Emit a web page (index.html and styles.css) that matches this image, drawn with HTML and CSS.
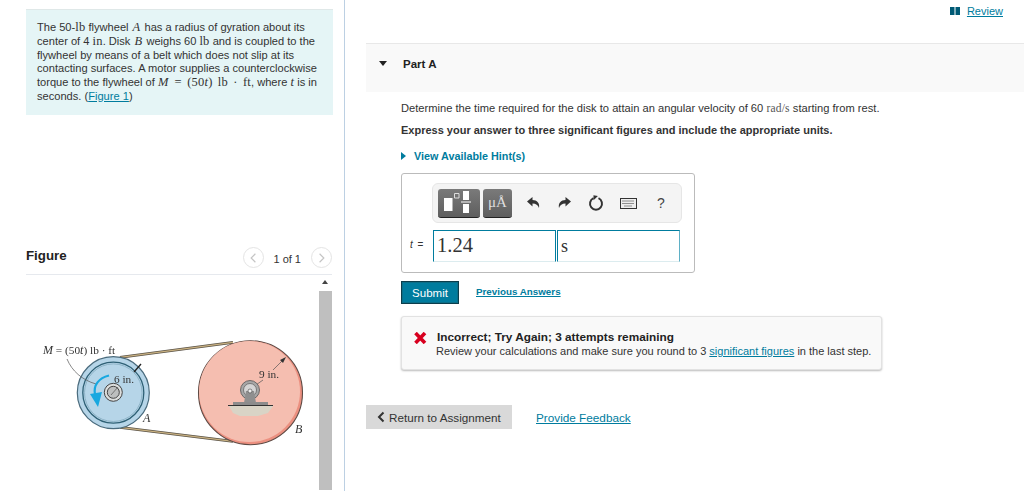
FILE: index.html
```html
<!DOCTYPE html>
<html lang="en">
<head>
<meta charset="utf-8">
<title>Part A</title>
<link rel="stylesheet" href="styles.css">
</head>
<body>
<div class="page">
  <aside class="left">
    <div class="prompt">The 50-<span class="m">lb</span> flywheel <i class="m mv">A</i> has a radius of gyration about its center of 4 <span class="m">in</span>. Disk <i class="m mv">B</i> weighs 60 <span class="m">lb</span> and is coupled to the flywheel by means of a belt which does not slip at its contacting surfaces. A motor supplies a counterclockwise torque to the flywheel of <i class="m">M</i> <span class="m mw">= (50<i>t</i>) lb · ft</span>, where <i class="m">t</i> is in seconds. (<a href="#">Figure 1</a>)</div>
    <div class="fig-head">
      <h2>Figure</h2>
      <div class="pager">
        <span class="pg"><svg viewBox="0 0 20 20" width="20" height="20"><path d="M12 5.500 7.500 10l4.500 4.500" class="chev"/></svg></span>
        <span class="pg-text">1 of 1</span>
        <span class="pg"><svg viewBox="0 0 20 20" width="20" height="20"><path d="M8 5.500 12.500 10 8 14.500" class="chev"/></svg></span>
      </div>
    </div>
    <div class="fig-body">
      <svg class="figure" viewBox="0 0 293 215" width="293" height="215">
        <g transform="translate(-26 -276)">
          <path d="M120 358.300 233 343.300 M120 428.300 233 442.300" class="belt-o"/>
          <path d="M120 358.300 233 343.300 M120 428.300 233 442.300" class="belt-i"/>
          <circle cx="113.300" cy="393.700" r="36" class="a-disk"/>
          <circle cx="113.300" cy="393.700" r="30.500" class="a-rim"/>
          <circle cx="113.300" cy="393.700" r="28.800" class="a-rim2"/>
          <circle cx="113.300" cy="393.300" r="9" class="hub-o"/>
          <circle cx="113.300" cy="393.300" r="6" class="hub-i"/>
          <path d="M111 396 118 388" class="thin"/>
          <path d="M67 360C72 372 82 381 96 385" class="thin"/>
          <path d="M134 373 141 365" class="arrow"/>
          <path d="M109 376.500C99 379 93 386 95 396" class="cyan"/>
          <path d="M90 395 102 393 98 408Z" class="cyan-fill"/>
          <circle cx="250.500" cy="393.700" r="52" class="b-rim"/>
          <circle cx="249.500" cy="392.500" r="50.500" class="b-disk"/>
          <path d="M253 388 263 381 M273 371 285 359" class="thin"/>
          <path d="M286 358 280 361 283 364Z" class="dark-fill"/>
          <path d="M229 407H273L268 414 258 417 240 417 233 414Z" class="ground"/>
          <circle cx="250" cy="391" r="9.500" class="pin-o"/>
          <circle cx="250" cy="391" r="6.500" class="pin-i"/>
          <path d="M244 404 246 392H254L256 404Z" class="pin-s"/>
          <circle cx="250" cy="392" r="2" class="pin-c"/>
          <path d="M233 403H268V406H233Z" class="plate"/>
          <path d="M228 406.500H273" class="base"/>
          <text x="43" y="355" class="t"><tspan class="ti">M</tspan> = (50<tspan class="ti">t</tspan>) lb · ft</text>
          <text x="114" y="384" class="t">6 in.</text>
          <text x="259" y="379" class="t">9 in.</text>
          <text x="143" y="423" class="t ti">A</text>
          <text x="295" y="434" class="t ti">B</text>
        </g>
      </svg>
      <div class="scrollbar">
        <span class="up"></span>
        <span class="thumb"></span>
      </div>
    </div>
  </aside>
  <main class="right">
    <div class="review"><svg class="book" viewBox="0 0 10 8" width="10" height="8"><path d="M0 0H4.500V8H0ZM5.500 0H10V8H5.500Z"/></svg><a href="#">Review</a></div>
    <div class="part"><span class="tri-down"></span><span>Part A</span></div>
    <div class="content">
      <p class="q">Determine the time required for the disk to attain an angular velocity of 60 <span class="m">rad/s</span> starting from rest.</p>
      <p class="bold">Express your answer to three significant figures and include the appropriate units.</p>
      <div class="hint"><span class="tri-right"></span>View Available Hint(s)</div>
      <div class="answer">
        <div class="toolbar">
          <span class="tbtn tw"><svg viewBox="0 0 42 29" width="42" height="29"><path d="M6 10H14.500V23H6ZM25 3H31V12H25ZM25 16H31V25H25ZM23 13.500H33V14.500H23Z" class="wf"/><path d="M16.500 5.500H21V10H16.500Z" class="ws"/></svg></span>
          <span class="tbtn tm">μÅ</span>
          <svg class="ti-ic ic-a" viewBox="0 0 16 16" width="16" height="16"><path d="M1 6.500 6.500 2V5C11 5 14 8 13 13 12 10 10 8.500 6.500 8.500V11.500Z"/></svg>
          <svg class="ti-ic ic-a" viewBox="0 0 16 16" width="16" height="16"><path d="M15 6.500 9.500 2V5C5 5 2 8 3 13 4 10 6 8.500 9.500 8.500V11.500Z"/></svg>
          <svg class="ti-ic" viewBox="0 0 16 16" width="16" height="16"><path d="M10.500 3.200A6 6 0 1 1 5.500 3.200" class="ring"/><path d="M5 0.500 9.500 0.500 6 5.500Z" transform="rotate(10 7 3)"/></svg>
          <svg class="ti-ic" viewBox="0 0 17 11" width="17" height="11"><rect x=".5" y=".5" width="16" height="10" class="kbf"/><path d="M2.500 3H14.500M2.500 5.500H14.500M4.500 8H12.500" class="kbk"/></svg>
          <span class="help">?</span>
        </div>
        <div class="inputs">
          <span class="lbl"><i>t</i> =</span>
          <div class="fld v">1.24</div>
          <div class="fld u">s</div>
        </div>
      </div>
      <div class="actions">
        <button class="submit" type="button">Submit</button>
        <a class="prev" href="#">Previous Answers</a>
      </div>
      <div class="feedback">
        <svg class="x" viewBox="0 0 14 12" width="14" height="12"><path d="M2.500 1 12 11M12 1 2.500 11"/></svg>
        <div class="fb-text">
          <div class="fb-title">Incorrect; Try Again; 3 attempts remaining</div>
          <div class="fb-body">Review your calculations and make sure you round to 3 <a href="#">significant figures</a> in the last step.</div>
        </div>
      </div>
    </div>
    <div class="foot">
      <button class="ret" type="button"><svg viewBox="0 0 8 12" width="8" height="12"><path d="M6.500 1.500 2 6l4.500 4.500"/></svg>Return to Assignment</button>
      <a href="#">Provide Feedback</a>
    </div>
  </main>
</div>
</body>
</html>
```
FILE: styles.css
```css
html, body {
  margin: 0;
  height: 100%;
  background: #fff;
  overflow: hidden;
}
body {
  font-family: "Liberation Sans", Arial, sans-serif;
  font-size: 11px;
  color: #333;
}
a { color: #007c9e; }
.page {
  display: flex;
  height: 491px;
}
.left {
  width: 345px;
  box-sizing: border-box;
  border-right: 1px solid #bcd0e3;
  padding: 9px 11px 0 26px;
  flex: none;
}
.prompt {
  box-sizing: border-box;
  height: 106px;
  border-top: 1px solid #dfe8e8;
  background: #e5f5f6;
  padding: 11px 11px 0;
  font-size: 11.100px;
  line-height: 13.800px;
}
.m { font-family: "Liberation Serif", serif; font-size: 12.500px; letter-spacing: .2px; }
.mv { margin: 0 1px; }
.mw { word-spacing: 2px; margin-left: 3px; }
.fig-head {
  display: flex;
  justify-content: space-between;
  height: 160px;
  box-sizing: border-box;
  padding-top: 132px;
  margin-right: 1px;
  border-bottom: 1px solid #e6e9ee;
}
.fig-head h2 {
  margin: 0;
  font-size: 13.300px;
  line-height: 18px;
  font-weight: bold;
  color: #222;
}
.pager {
  display: flex;
  align-items: center;
  height: 21px;
  gap: 9px;
}
.pg {
  box-sizing: border-box;
  width: 21px;
  height: 21px;
  border: 1px solid #e4e4e4;
  border-radius: 50%;
  display: flex;
  align-items: center;
  justify-content: center;
}
.chev { fill: none; stroke: #c4c4c4; stroke-width: 1.200; }
.pg-text { font-size: 11px; color: #333; padding: 3px 1px 0 0; }
.fig-body {
  display: flex;
  height: 215px;
  margin-right: 1px;
}
.figure { flex: none; margin-right: -280px; filter: blur(.35px); }
.t { font-family: "Liberation Serif", serif; font-size: 11.300px; fill: #333; }
.ti { font-style: italic; font-size: 12px; }
.belt-o { stroke: #5a5347; stroke-width: 2.800; fill: none; }
.belt-i { stroke: #c9b182; stroke-width: 1.200; fill: none; }
.a-disk { fill: #b6d5e8; stroke: #4a6b7d; stroke-width: 1.200; }
.a-rim { fill: none; stroke: #2e6075; stroke-width: 1.300; }
.a-rim2 { fill: none; stroke: #8eb4c8; stroke-width: 1; }
.hub-o { fill: #dcdedd; stroke: #444; stroke-width: 1; }
.hub-i { fill: #bdbfbf; stroke: #444; stroke-width: 1; }
.thin { fill: none; stroke: #555; stroke-width: .7; }
.arrow { stroke: #222; stroke-width: 1.300; }
.cyan { fill: none; stroke: #18a8e0; stroke-width: 2.200; }
.cyan-fill { fill: #18a8e0; }
.b-rim { fill: #ec9080; stroke: #5e4a44; stroke-width: 1.100; }
.b-disk { fill: #f5beb0; }
.dark-fill { fill: #333; }
.ground { fill: #d9d4c6; }
.pin-o { fill: #a6a6a6; stroke: #555; stroke-width: .8; }
.pin-i { fill: #d4d4d4; stroke: #666; stroke-width: .8; }
.pin-s { fill: #8f8f8f; }
.pin-c { fill: #eee; stroke: #444; stroke-width: .6; }
.plate { fill: #8c8c8c; }
.base { fill: none; stroke: #333; stroke-width: 1; }
.scrollbar {
  margin-left: auto;
  width: 13px;
  display: flex;
  flex-direction: column;
  z-index: 1;
}
.up {
  height: 16px;
  position: relative;
  flex: none;
}
.up::after {
  content: "";
  position: absolute;
  left: 3px;
  top: 5px;
  border: 3.500px solid transparent;
  border-top: 0;
  border-bottom: 4px solid #444;
}
.thumb { flex: 1; background: #bfbfbf; }
.right {
  flex: 1;
  min-width: 0;
  padding-left: 21px;
}
.review {
  display: flex;
  justify-content: flex-end;
  align-items: center;
  gap: 7px;
  height: 21px;
  margin-right: 21px;
  font-size: 11px;
}
.book { fill: #005a75; }
.part {
  display: flex;
  gap: 16px;
  align-items: flex-start;
  box-sizing: border-box;
  height: 49px;
  margin-top: 22px;
  padding: 13px 0 0 13px;
  background: #f9f9f9;
  border-top: 1px solid #e8e8e8;
  font-size: 12px;
  line-height: 14px;
  color: #222;
}
.part span:last-child { font-weight: bold; font-size: 11.500px; }
.tri-down {
  width: 0;
  margin-top: 4px;
  border: 4px solid transparent;
  border-top: 5px solid #222;
  border-bottom: 0;
}
.content { padding-left: 35px; }
.q {
  margin: 9px 0 0;
  line-height: 14px;
  font-size: 11.150px;
}
.q .m { font-size: 11.500px; color: #555; }
.bold {
  margin: 8px 0 0;
  font-weight: bold;
  line-height: 14px;
  font-size: 11px;
}
.hint {
  margin-top: 12px;
  display: flex;
  align-items: center;
  font-weight: bold;
  line-height: 14px;
  font-size: 10.800px;
  color: #007c9e;
}
.tri-right {
  border: 4px solid transparent;
  border-left: 5px solid #007c9e;
  border-right: 0;
  margin-right: 8px;
}
.answer {
  box-sizing: border-box;
  width: 294px;
  height: 100px;
  margin-top: 10px;
  border: 1px solid #bbb;
  border-radius: 3px;
  padding: 9px 12px 0 0;
}
.toolbar {
  box-sizing: border-box;
  margin-left: 30px;
  height: 40px;
  background: #f4f4f4;
  border: 1px solid #e6e6e6;
  border-radius: 6px;
  display: flex;
  align-items: center;
  padding-left: 5px;
  gap: 3px;
}
.tbtn {
  display: flex;
  align-items: center;
  justify-content: center;
  height: 29px;
  background: linear-gradient(#7a7a7a, #5e5e5e);
  border-bottom: 1px solid #222;
  border-radius: 3px;
  box-sizing: border-box;
}
.tw { width: 42px; }
.wf { fill: #fff; }
.ws { fill: none; stroke: #ddd; stroke-width: 1; }
.tm {
  width: 29px;
  color: #dedede;
  font-family: "Liberation Serif", serif;
  font-size: 15px;
}
.ti-ic { margin-left: 13px; fill: #333; flex: none; }
.ic-a { margin-left: 11px; }
.ring { fill: none; stroke: #333; stroke-width: 2; }
.kbf { fill: #eee; stroke: #333; stroke-width: 1; }
.kbk { stroke: #333; stroke-width: 1; stroke-dasharray: 1 1; }
.help { margin-left: 17px; font-size: 14px; color: #444; }
.inputs {
  display: flex;
  align-items: flex-start;
  margin-top: 7px;
}
.lbl {
  width: 31px;
  box-sizing: border-box;
  padding-left: 8px;
  font-size: 10px;
  word-spacing: 2px;
  line-height: 30px;
  flex: none;
}
.fld {
  box-sizing: border-box;
  height: 32px;
  border: 1px solid #007c9e;
  border-bottom-color: #dcecef;
  font-family: "Liberation Serif", serif;
  color: #333;
}
.v { width: 123px; margin-right: 1px; font-size: 20.500px; line-height: 28px; padding-left: 3px; border-right-color: #007c9e; }
.u { width: 123px; font-size: 18px; line-height: 30px; padding-left: 3px; border-color: #007c9e #5fb0c6 #dcecef #007c9e; }
.actions {
  display: flex;
  align-items: center;
  gap: 17px;
  margin-top: 8px;
}
.submit {
  box-sizing: border-box;
  width: 58px;
  height: 23px;
  padding: 0;
  border: 1px solid #0c3e4c;
  outline: 1px solid #0c6e88;
  outline-offset: -2px;
  background: #007c9e;
  color: #fff;
  font: 11.500px "Liberation Sans", Arial, sans-serif;
}
.prev { font-weight: bold; font-size: 9.800px; margin-bottom: 2px; }
.feedback {
  box-sizing: border-box;
  width: 481px;
  height: 54px;
  margin-top: 12px;
  background: #f9f9f9;
  border: 1px solid #e2e2e2;
  border-radius: 3px;
  box-shadow: 0 1px 2px #bbb;
  display: flex;
  padding: 13px 0 0 11px;
  gap: 9px;
}
.x { fill: none; stroke: #d8001f; stroke-width: 3.600; flex: none; margin-top: 2px; }
.fb-text { line-height: 14px; font-size: 11px; }
.fb-title { font-weight: bold; padding-left: 1px; color: #222; font-size: 11.800px; line-height: 14px; }
.foot {
  display: flex;
  align-items: center;
  margin-top: 35px;
  gap: 24px;
  font-size: 11.750px;
}
.ret {
  box-sizing: border-box;
  width: 146px;
  height: 24px;
  padding: 0 0 0 11px;
  border: 0;
  display: flex;
  align-items: center;
  gap: 4px;
  background: #d9d9d9;
  color: #333;
  font: 11.700px "Liberation Sans", Arial, sans-serif;
}
.ret svg { fill: none; stroke: #333; stroke-width: 2; }
```
